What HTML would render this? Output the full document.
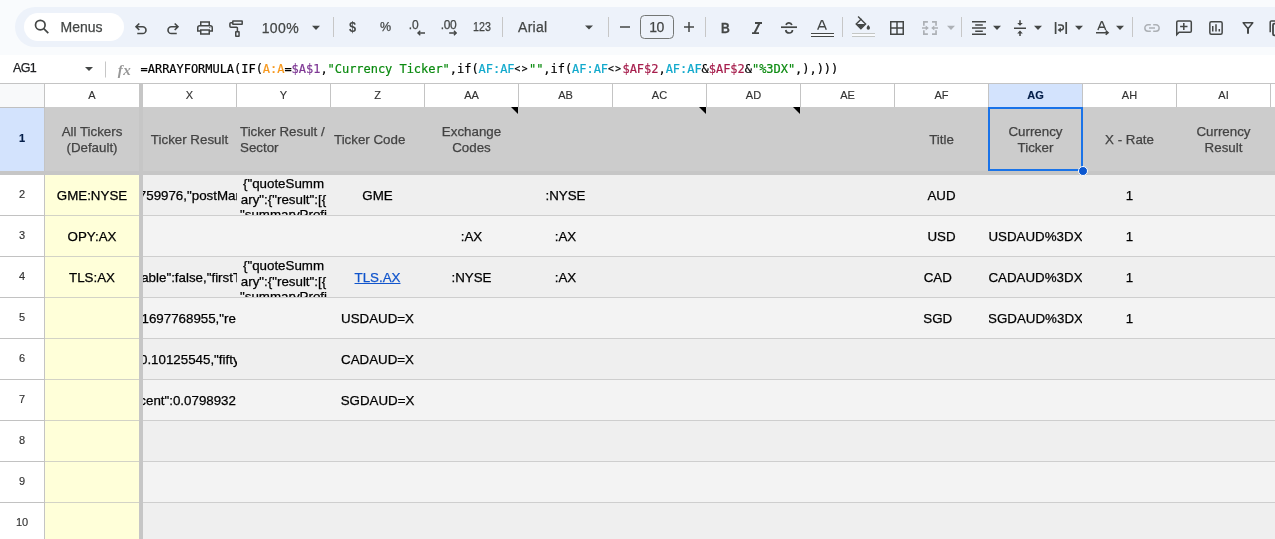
<!DOCTYPE html><html><head><meta charset="utf-8"><title>Sheet</title><style>
*{box-sizing:border-box;margin:0;padding:0}
html,body{width:1275px;height:539px;overflow:hidden;background:#f9fbfd;font-family:"Liberation Sans",sans-serif;-webkit-font-smoothing:antialiased;-webkit-text-stroke:0.25px}
#root{position:absolute;left:0;top:0;width:1275px;height:539px;will-change:transform}
.abs{position:absolute}
#tb{position:absolute;left:15px;top:7px;width:1260px;height:40px;border-radius:20px 0 0 20px;background:#edf2fa}
#menus{position:absolute;left:24px;top:13px;width:100px;height:28px;border-radius:14px;background:#fff}
.tt{position:absolute;color:#444746;font-size:14px;white-space:nowrap;line-height:16px}
.sep{position:absolute;width:1px;height:20px;top:17px;background:#c7c7c7}
#fbar{position:absolute;left:0;top:55px;width:1275px;height:28px;background:#fff}
.ch{position:absolute;top:84px;height:23px;width:93px;font-size:11px;line-height:23px;-webkit-text-stroke:0.15px;text-align:center;color:#333;background:#fff}
.rh{position:absolute;left:0;width:44px;font-size:11px;-webkit-text-stroke:0.15px;text-align:center;color:#333;background:#fff}
.vl{position:absolute;width:1px;background:#c4c4c4}
.hl{position:absolute;height:1px;background:#c4c4c4}
.c{position:absolute;width:93px;font-size:13.333px;line-height:16px;color:#000;overflow:hidden;white-space:nowrap;display:flex;align-items:center;justify-content:center;text-align:center;padding-top:2px}
.h{color:#434343;white-space:normal}
.l{justify-content:flex-start;text-align:left;padding-left:3px}
</style></head><body><div id="root">
<div id="tb"></div>
<div id="menus"></div>
<div class="tt" style="left:60.5px;top:19px">Menus</div>
<div class="tt" style="left:261.7px;top:19.5px;letter-spacing:0.4px">100%</div>
<div class="tt" style="left:349.2px;top:18.5px;font-size:14.2px;font-weight:bold;transform:scaleX(0.9);transform-origin:0 0;-webkit-text-stroke:0">$</div>
<div class="tt" style="left:380px;top:18.5px;font-size:12.5px;letter-spacing:-0.3px">%</div>
<div class="tt" style="left:408.7px;top:16.5px;font-size:12px;letter-spacing:0">.0</div>
<div class="tt" style="left:440.8px;top:16.5px;font-size:12px;letter-spacing:-0.4px">.00</div>
<div class="tt" style="left:473px;top:18.5px;font-size:12px;transform:scaleX(0.89);transform-origin:0 0">123</div>
<div class="tt" style="left:518px;top:18.5px;letter-spacing:0.3px">Arial</div>
<div class="tt" style="left:640px;top:15px;width:34px;height:24px;border:1px solid #747775;border-radius:4.5px;text-align:center;line-height:23px;letter-spacing:-0.6px;padding-right:1px">10</div>
<div class="sep" style="left:333px"></div>
<div class="sep" style="left:502px"></div>
<div class="sep" style="left:608px"></div>
<div class="sep" style="left:705px"></div>
<div class="sep" style="left:842px"></div>
<div class="sep" style="left:961px"></div>
<div class="sep" style="left:1132px"></div>
<svg class="abs" style="left:0;top:0" width="1275" height="55" viewBox="0 0 1275 55" fill="none" stroke="#444746" stroke-width="1.5">
<!-- search -->
<circle cx="40.3" cy="25.1" r="4.8" stroke-width="1.7"/><path d="M43.8 28.6L48.3 33.1" stroke-width="1.7"/>
<!-- undo -->
<path d="M139.3 23.5L136.05 26.75L139.3 30M136.3 26.75H142.6A3.375 3.375 0 0 1 142.6 33.5H137.25" stroke-width="1.65"/>
<!-- redo -->
<path d="M174.7 23.5L177.95 26.75L174.7 30M177.7 26.75H171.4A3.375 3.375 0 0 0 171.4 33.5H176.75" stroke-width="1.65"/>
<!-- print -->
<path d="M200.75 25.4V22H209.25V25.4M200.4 31H197.75V27.7A2 2 0 0 1 199.75 25.7H210.25A2 2 0 0 1 212.25 27.7V31H209.6M200.75 29.9H209.25V34H200.75Z"/>
<circle cx="209.8" cy="27.6" r="0.6" fill="#444746" stroke="none"/>
<!-- paint roller -->
<rect x="232.8" y="20.95" width="9.4" height="3.3" rx="0.2" stroke-linejoin="round"/>
<path d="M233 22.65H230.9A1 1 0 0 0 229.9 23.65V26.3A1 1 0 0 0 230.9 27.3H236.6A0.8 0.8 0 0 1 237.4 28.1V31.5"/>
<rect x="235.75" y="31.75" width="3.3" height="4.4" rx="0.2" stroke-linejoin="round"/>
<path d="M418 33H425M420.3 30.7L417.9 33L420.3 35.3M449.2 33H456.2M453.9 30.7L456.3 33L453.9 35.3" stroke-width="1.3"/>
<!-- minus / plus -->
<path d="M620 27H630M684 27H694M689 22V32"/>
<!-- italic -->
<path d="M755 23H762M752 33.1H759" stroke-width="1.8"/><path d="M759.6 23L754.4 33.1" stroke-width="2"/>
<!-- strikethrough -->
<path d="M781 27.2H797" stroke-width="1.7"/>
<path d="M786.1 25C786.5 23.6 787.6 22.9 789 22.9C790.4 22.9 791.4 23.6 791.9 25M785.7 30C786 32 787.3 33 789.2 33C791.1 33 792.4 32 792.5 30" stroke-width="1.7"/>
<!-- text color A -->
<path d="M817.7 29.8L821.5 20.6H822.5L826.3 29.8M819.2 26.7H824.8" stroke-width="1.4" stroke-linejoin="bevel"/><rect x="811" y="34" width="23" height="2" fill="#f8fafd" stroke="none"/><rect x="852" y="34" width="23" height="2" fill="#f8fafd" stroke="none"/>
<path d="M811 33.5H834M811 36.5H834" stroke-width="1"/>
<!-- fill color -->
<path d="M858.1 16.6L865.6 24.1L860.9 28.8L856.2 24.1L861.6 18.7" stroke-width="1.4"/>
<path d="M856.6 24.1H865.3L860.9 28.4Z" fill="#444746" stroke="none"/>
<path d="M868.3 25.1C868.3 25.1 866.6 27 866.6 28.1A1.7 1.7 0 0 0 870 28.1C870 27 868.3 25.1 868.3 25.1Z" fill="#444746" stroke="none"/>
<path d="M852 33.5H875M852 36.5H875" stroke="#c4c7c5" stroke-width="1"/>
<!-- borders -->
<path d="M890.75 21.75H903.25V34.25H890.75ZM897 21.75V34.25M890.75 28H903.25"/>
<!-- merge (disabled) -->
<g stroke="#adb1b6" stroke-width="1.7">
<path d="M927.9 21.85H923.85V25.7M923.85 30.3V34.15H927.9M932 21.85H936.05V25.7M936.05 30.3V34.15H932"/>
<path d="M922 28H926.5M938 28H933.5" stroke-width="1.6"/>
</g>
<path d="M925.7 25.4L928.8 28L925.7 30.6ZM934.3 25.4L931.2 28L934.3 30.6Z" fill="#adb1b6" stroke="none"/>
<!-- align center -->
<path d="M972 21.75H986M975.2 24.9H982.8M972 28.05H986M975.2 31.2H982.8M972 34.35H986"/>
<!-- valign middle -->
<path d="M1014 28.2H1026M1020 20.2V24.5M1020 36V31.8"/>
<path d="M1017.2 22.9H1022.8L1020 25.8ZM1017.2 33.4H1022.8L1020 30.5Z" fill="#444746" stroke="none"/>
<!-- wrap -->
<path d="M1055.6 21.9V34M1066.2 21.9V34" stroke-width="1.7"/><path d="M1058.1 25.1H1061A2.4 2.4 0 0 1 1061 29.9H1059.5" stroke-width="1.5"/>
<path d="M1060.9 27.3L1057.6 29.9L1060.9 32.6Z" fill="#444746" stroke="none"/>
<!-- text rotation -->
<path d="M1097.9 30L1101.3 21.8H1102.3L1105.7 30M1099.4 27.2H1104.2" stroke-width="1.4" stroke-linejoin="bevel"/>
<path d="M1096 32.7H1108M1105.7 30.6L1108.2 32.7L1105.7 34.8" stroke-width="1.4"/>
<!-- link (disabled) -->
<g stroke="#adb1b6">
<path d="M1150.8 24.85H1148A3.15 3.15 0 0 0 1148 31.15H1150.8M1153.2 24.85H1156A3.15 3.15 0 0 1 1156 31.15H1153.2M1149 28H1155"/>
</g>
<!-- comment -->
<path d="M1176.75 34.6V22.2A1.3 1.3 0 0 1 1178.05 20.9H1190A1.3 1.3 0 0 1 1191.3 22.2V31A1.3 1.3 0 0 1 1190 32.3H1179.1Z"/>
<path d="M1180.1 26.5H1187.5M1183.8 22.9V30"/>
<!-- chart -->
<rect x="1209.85" y="21.85" width="12.3" height="12.3" rx="1.5"/>
<path d="M1212.75 26.1V31.6M1216 24.2V31.6M1219.3 28.9V31.6"/>
<!-- filter -->
<path d="M1243.2 22.7H1252.8L1248 28.7Z" stroke-linejoin="round"/>
<path d="M1248 28V33.8" stroke-width="2"/>
<!-- partial icon -->
<path d="M1275 20.9H1271.5A1.3 1.3 0 0 0 1270.2 22.2V32.3" />
<path d="M1275 23.7H1274.3A1.3 1.3 0 0 0 1273 25V34A1.3 1.3 0 0 0 1274.3 35.3H1275" stroke-width="1.8"/>
<!-- dropdown triangles -->
<g fill="#444746" stroke="none">
<path d="M312 25.8H320L316 29.9Z"/>
<path d="M585 25.5H593L589 29.6Z"/>
<path d="M993 25.8H1001L997 29.9Z"/>
<path d="M1034 25.8H1042L1038 29.9Z"/>
<path d="M1075 25.8H1083L1079 29.9Z"/>
<path d="M1116 25.8H1124L1120 29.9Z"/>
<!-- decimal arrows -->


</g>
<path d="M947 25.8H955L951 29.9Z" fill="#adb1b6" stroke="none"/>
</svg>
<div class="tt" style="left:720.6px;top:19.6px;font-weight:bold;font-size:14.5px;transform:scaleX(0.84);transform-origin:0 0;-webkit-text-stroke:0.3px">B</div>

<div id="fbar"></div>
<div class="abs" style="left:13px;top:60.3px;font-size:12.5px;line-height:16px;color:#202124;letter-spacing:-0.6px">AG1</div>
<svg class="abs" style="left:0;top:55px" width="150" height="28"><path d="M85 12H93L89 16Z" fill="#444746"/><rect x="105" y="6.5" width="1" height="16" fill="#c7c7c7"/></svg>
<div class="abs" style="left:117.8px;top:59.6px;font-family:'Liberation Serif',serif;font-style:italic;font-weight:bold;font-size:15px;line-height:20px;color:#989898;letter-spacing:0.5px;-webkit-text-stroke:0">fx</div>
<div class="abs" style="left:140.6px;top:60.7px;font-family:'DejaVu Sans Mono','Liberation Mono',monospace;font-size:12px;line-height:16px;color:#000;white-space:pre;letter-spacing:-0.035px;-webkit-text-stroke:0.2px">=ARRAYFORMULA(IF(<span style="color:#f7981d">A:A</span>=<span style="color:#7e3794">$A$1</span>,<span style="color:#0a8a0f">"Currency Ticker"</span>,if(<span style="color:#11a9cc">AF:AF</span><span style="font-size:9.6px;letter-spacing:1.43px;position:relative;top:-0.8px">&lt;&gt;</span><span style="color:#0a8a0f">""</span>,if(<span style="color:#11a9cc">AF:AF</span><span style="font-size:9.6px;letter-spacing:1.43px;position:relative;top:-0.8px">&lt;&gt;</span><span style="color:#a61d4c">$AF$2</span>,<span style="color:#11a9cc">AF:AF</span>&amp;<span style="color:#a61d4c">$AF$2</span>&amp;<span style="color:#0a8a0f">"%3DX"</span>,),)))</div>

<div class="abs" style="left:0;top:83px;width:1275px;height:456px;background:#fff"></div>
<div class="hl" style="left:0;top:83px;width:1275px"></div>
<div class="abs" style="left:0;top:84px;width:44px;height:23px;background:#f8f9fa"></div>
<div class="ch" style="left:45px;width:94px;">A</div>
<div class="ch" style="left:143px;width:93px;">X</div>
<div class="ch" style="left:237px;width:93px;">Y</div>
<div class="ch" style="left:331px;width:93px;">Z</div>
<div class="ch" style="left:425px;width:93px;">AA</div>
<div class="ch" style="left:519px;width:93px;">AB</div>
<div class="ch" style="left:613px;width:93px;">AC</div>
<div class="ch" style="left:707px;width:93px;">AD</div>
<div class="ch" style="left:801px;width:93px;">AE</div>
<div class="ch" style="left:895px;width:93px;">AF</div>
<div class="ch" style="left:989px;width:93px;background:#d3e3fd;color:#041e49;font-weight:bold;">AG</div>
<div class="ch" style="left:1083px;width:93px;">AH</div>
<div class="ch" style="left:1177px;width:93px;">AI</div>
<div class="vl" style="left:44px;top:84px;height:455px"></div>
<div class="vl" style="left:236px;top:84px;height:23px"></div>
<div class="vl" style="left:330px;top:84px;height:23px"></div>
<div class="vl" style="left:424px;top:84px;height:23px"></div>
<div class="vl" style="left:518px;top:84px;height:23px"></div>
<div class="vl" style="left:612px;top:84px;height:23px"></div>
<div class="vl" style="left:706px;top:84px;height:23px"></div>
<div class="vl" style="left:800px;top:84px;height:23px"></div>
<div class="vl" style="left:894px;top:84px;height:23px"></div>
<div class="vl" style="left:988px;top:84px;height:23px"></div>
<div class="vl" style="left:1082px;top:84px;height:23px"></div>
<div class="vl" style="left:1176px;top:84px;height:23px"></div>
<div class="vl" style="left:1270px;top:84px;height:23px"></div>
<div class="abs" style="left:45px;top:107px;width:1230px;height:64px;background:#ccc"></div>
<div class="abs" style="left:143px;top:175px;width:1132px;height:40px;background:#efefef"></div>
<div class="abs" style="left:45px;top:175px;width:94px;height:40px;background:#ffffd9"></div>
<div class="abs" style="left:143px;top:216px;width:1132px;height:40px;background:#f3f3f3"></div>
<div class="abs" style="left:45px;top:216px;width:94px;height:40px;background:#ffffd9"></div>
<div class="abs" style="left:143px;top:257px;width:1132px;height:40px;background:#efefef"></div>
<div class="abs" style="left:45px;top:257px;width:94px;height:40px;background:#ffffd9"></div>
<div class="abs" style="left:143px;top:298px;width:1132px;height:40px;background:#f3f3f3"></div>
<div class="abs" style="left:45px;top:298px;width:94px;height:40px;background:#ffffd9"></div>
<div class="abs" style="left:143px;top:339px;width:1132px;height:40px;background:#efefef"></div>
<div class="abs" style="left:45px;top:339px;width:94px;height:40px;background:#ffffd9"></div>
<div class="abs" style="left:143px;top:380px;width:1132px;height:40px;background:#f3f3f3"></div>
<div class="abs" style="left:45px;top:380px;width:94px;height:40px;background:#ffffd9"></div>
<div class="abs" style="left:143px;top:421px;width:1132px;height:40px;background:#efefef"></div>
<div class="abs" style="left:45px;top:421px;width:94px;height:40px;background:#ffffd9"></div>
<div class="abs" style="left:143px;top:462px;width:1132px;height:40px;background:#f3f3f3"></div>
<div class="abs" style="left:45px;top:462px;width:94px;height:40px;background:#ffffd9"></div>
<div class="abs" style="left:143px;top:503px;width:1132px;height:40px;background:#efefef"></div>
<div class="abs" style="left:45px;top:503px;width:94px;height:40px;background:#ffffd9"></div>
<div class="rh" style="top:107px;height:64px;line-height:62px;background:#d3e3fd;color:#041e49;font-weight:bold;">1</div>
<div class="rh" style="top:175px;height:40px;line-height:38px;">2</div>
<div class="rh" style="top:216px;height:40px;line-height:38px;">3</div>
<div class="rh" style="top:257px;height:40px;line-height:38px;">4</div>
<div class="rh" style="top:298px;height:40px;line-height:38px;">5</div>
<div class="rh" style="top:339px;height:40px;line-height:38px;">6</div>
<div class="rh" style="top:380px;height:40px;line-height:38px;">7</div>
<div class="rh" style="top:421px;height:40px;line-height:38px;">8</div>
<div class="rh" style="top:462px;height:40px;line-height:38px;">9</div>
<div class="rh" style="top:503px;height:40px;line-height:38px;">10</div>
<div class="hl" style="left:0;top:107px;width:45px;background:#c0c0c0"></div>
<div class="hl" style="left:0;top:215px;width:45px;background:#c2c2c2"></div>
<div class="hl" style="left:45px;top:215px;width:94px;background:#d3d3c6"></div>
<div class="hl" style="left:143px;top:215px;width:1132px;background:#cecece"></div>
<div class="hl" style="left:0;top:256px;width:45px;background:#c2c2c2"></div>
<div class="hl" style="left:45px;top:256px;width:94px;background:#d3d3c6"></div>
<div class="hl" style="left:143px;top:256px;width:1132px;background:#cecece"></div>
<div class="hl" style="left:0;top:297px;width:45px;background:#c2c2c2"></div>
<div class="hl" style="left:45px;top:297px;width:94px;background:#d3d3c6"></div>
<div class="hl" style="left:143px;top:297px;width:1132px;background:#cecece"></div>
<div class="hl" style="left:0;top:338px;width:45px;background:#c2c2c2"></div>
<div class="hl" style="left:45px;top:338px;width:94px;background:#d3d3c6"></div>
<div class="hl" style="left:143px;top:338px;width:1132px;background:#cecece"></div>
<div class="hl" style="left:0;top:379px;width:45px;background:#c2c2c2"></div>
<div class="hl" style="left:45px;top:379px;width:94px;background:#d3d3c6"></div>
<div class="hl" style="left:143px;top:379px;width:1132px;background:#cecece"></div>
<div class="hl" style="left:0;top:420px;width:45px;background:#c2c2c2"></div>
<div class="hl" style="left:45px;top:420px;width:94px;background:#d3d3c6"></div>
<div class="hl" style="left:143px;top:420px;width:1132px;background:#cecece"></div>
<div class="hl" style="left:0;top:461px;width:45px;background:#c2c2c2"></div>
<div class="hl" style="left:45px;top:461px;width:94px;background:#d3d3c6"></div>
<div class="hl" style="left:143px;top:461px;width:1132px;background:#cecece"></div>
<div class="hl" style="left:0;top:502px;width:45px;background:#c2c2c2"></div>
<div class="hl" style="left:45px;top:502px;width:94px;background:#d3d3c6"></div>
<div class="hl" style="left:143px;top:502px;width:1132px;background:#cecece"></div>
<div class="abs" style="left:139px;top:84px;width:4px;height:455px;background:#c6c6c6"></div>
<div class="abs" style="left:0;top:171px;width:1275px;height:4px;background:#c6c6c6"></div>
<div class="c h" style="left:45px;top:107px;height:64px;width:94px;">All Tickers (Default)</div>
<div class="c h" style="left:143px;top:107px;height:64px;">Ticker Result</div>
<div class="c h l" style="left:237px;top:107px;height:64px;">Ticker Result / Sector</div>
<div class="c h l" style="left:331px;top:107px;height:64px;">Ticker Code</div>
<div class="c h" style="left:425px;top:107px;height:64px;padding:2px 10px 0;">Exchange Codes</div>
<div class="c h" style="left:895px;top:107px;height:64px;">Title</div>
<div class="c h" style="left:989px;top:107px;height:64px;padding:2px 10px 0;">Currency Ticker</div>
<div class="c h" style="left:1083px;top:107px;height:64px;">X - Rate</div>
<div class="c h" style="left:1177px;top:107px;height:64px;padding:2px 10px 0;">Currency Result</div>
<div class="c " style="left:45px;top:175px;height:40px;width:94px;">GME:NYSE</div>
<div class="c " style="left:45px;top:216px;height:40px;width:94px;">OPY:AX</div>
<div class="c " style="left:45px;top:257px;height:40px;width:94px;">TLS:AX</div>
<div class="c " style="left:143px;top:175px;height:40px;justify-content:flex-start;width:94px;"><span style="flex:none;margin-left:-4.2px">759976,&quot;postMarketChange&quot;</span></div>
<div class="c " style="left:143px;top:257px;height:40px;justify-content:flex-start;width:94px;"><span style="flex:none;margin-left:-1.8px">able&quot;:false,&quot;firstTradeDate</span></div>
<div class="c " style="left:143px;top:298px;height:40px;justify-content:flex-start;width:94px;"><span style="flex:none;margin-left:-1.5px">1697768955,&quot;re</span></div>
<div class="c " style="left:143px;top:339px;height:40px;justify-content:flex-start;width:94px;"><span style="flex:none;margin-left:-3px">0.10125545,&quot;fiftyDay</span></div>
<div class="c " style="left:143px;top:380px;height:40px;justify-content:flex-start;width:94px;"><span style="flex:none;margin-left:-3.7px">cent&quot;:0.0798932</span></div>
<div class="abs" style="left:237px;top:175px;width:93px;height:40px;overflow:hidden;padding-top:0.8px;font-size:13.333px;line-height:15.7px;text-align:center;white-space:nowrap;color:#000">{&quot;quoteSumm<br>ary&quot;:{&quot;result&quot;:[{<br>&quot;summaryProfi<br>le&quot;:{&quot;address</div>
<div class="abs" style="left:237px;top:257px;width:93px;height:40px;overflow:hidden;padding-top:0.8px;font-size:13.333px;line-height:15.7px;text-align:center;white-space:nowrap;color:#000">{&quot;quoteSumm<br>ary&quot;:{&quot;result&quot;:[{<br>&quot;summaryProfi<br>le&quot;:{&quot;address</div>
<div class="c " style="left:331px;top:175px;height:40px;">GME</div>
<div class="c " style="left:331px;top:257px;height:40px;"><span style="color:#1155cc;text-decoration:underline">TLS.AX</span></div>
<div class="c " style="left:331px;top:298px;height:40px;">USDAUD=X</div>
<div class="c " style="left:331px;top:339px;height:40px;">CADAUD=X</div>
<div class="c " style="left:331px;top:380px;height:40px;">SGDAUD=X</div>
<div class="c " style="left:425px;top:216px;height:40px;">:AX</div>
<div class="c " style="left:425px;top:257px;height:40px;">:NYSE</div>
<div class="c " style="left:519px;top:175px;height:40px;">:NYSE</div>
<div class="c " style="left:519px;top:216px;height:40px;">:AX</div>
<div class="c " style="left:519px;top:257px;height:40px;">:AX</div>
<div class="c " style="left:895px;top:175px;height:40px;">AUD</div>
<div class="c " style="left:895px;top:216px;height:40px;">USD</div>
<div class="c " style="left:895px;top:257px;height:40px;">CAD&nbsp;&nbsp;</div>
<div class="c " style="left:895px;top:298px;height:40px;">SGD&nbsp;&nbsp;</div>
<div class="c " style="left:989px;top:216px;height:40px;">USDAUD%3DX</div>
<div class="c " style="left:989px;top:257px;height:40px;">CADAUD%3DX</div>
<div class="c " style="left:989px;top:298px;height:40px;">SGDAUD%3DX</div>
<div class="c " style="left:1083px;top:175px;height:40px;">1</div>
<div class="c " style="left:1083px;top:216px;height:40px;">1</div>
<div class="c " style="left:1083px;top:257px;height:40px;">1</div>
<div class="c " style="left:1083px;top:298px;height:40px;">1</div>
<svg class="abs" style="left:511px;top:107px" width="7" height="7"><path d="M0 0H7V7Z" fill="#000"/></svg>
<svg class="abs" style="left:699px;top:107px" width="7" height="7"><path d="M0 0H7V7Z" fill="#000"/></svg>
<svg class="abs" style="left:793px;top:107px" width="7" height="7"><path d="M0 0H7V7Z" fill="#000"/></svg>
<div class="abs" style="left:988px;top:107px;width:95px;height:64px;border:2px solid #1a73e8"></div>
<div class="abs" style="left:1078px;top:166px;width:10px;height:10px;border-radius:5px;background:#0b57d0;border:1px solid #fff"></div>
</div></body></html>
